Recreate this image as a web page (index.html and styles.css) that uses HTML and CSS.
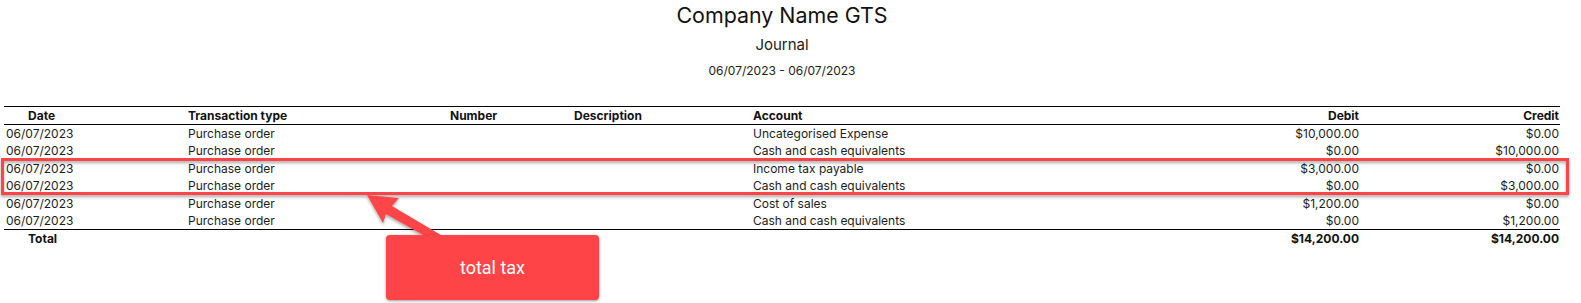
FILE: index.html
```html
<!DOCTYPE html>
<html lang="en">
<head>
<meta charset="utf-8">
<title>Journal</title>
<link rel="stylesheet" href="styles.css">
</head>
<body>
<div class="page">
  <div class="report">
    <header class="report-head">
      <div class="company">Company Name GTS</div>
      <div class="report-name">Journal</div>
      <div class="period">06/07/2023 - 06/07/2023</div>
    </header>
    <table class="journal">
      <colgroup>
        <col class="c-date"><col class="c-type"><col class="c-num"><col class="c-desc"><col class="c-acct"><col class="c-debit"><col class="c-credit">
      </colgroup>
      <thead>
        <tr>
          <th class="h-date">Date</th>
          <th class="h-left">Transaction type</th>
          <th class="h-num">Number</th>
          <th class="h-num">Description</th>
          <th class="h-left">Account</th>
          <th class="num">Debit</th>
          <th class="num">Credit</th>
        </tr>
      </thead>
      <tbody>
        <tr><td>06/07/2023</td><td>Purchase order</td><td></td><td></td><td>Uncategorised Expense</td><td class="num">$10,000.00</td><td class="num">$0.00</td></tr>
        <tr><td>06/07/2023</td><td>Purchase order</td><td></td><td></td><td>Cash and cash equivalents</td><td class="num">$0.00</td><td class="num">$10,000.00</td></tr>
        <tr><td>06/07/2023</td><td>Purchase order</td><td></td><td></td><td>Income tax payable</td><td class="num">$3,000.00</td><td class="num">$0.00</td></tr>
        <tr><td>06/07/2023</td><td>Purchase order</td><td></td><td></td><td>Cash and cash equivalents</td><td class="num">$0.00</td><td class="num">$3,000.00</td></tr>
        <tr><td>06/07/2023</td><td>Purchase order</td><td></td><td></td><td>Cost of sales</td><td class="num">$1,200.00</td><td class="num">$0.00</td></tr>
        <tr><td>06/07/2023</td><td>Purchase order</td><td></td><td></td><td>Cash and cash equivalents</td><td class="num">$0.00</td><td class="num">$1,200.00</td></tr>
      </tbody>
      <tfoot>
        <tr><td class="h-date">Total</td><td></td><td></td><td></td><td></td><td class="num">$14,200.00</td><td class="num">$14,200.00</td></tr>
      </tfoot>
    </table>
  </div>

  <div class="highlight"></div>
  <svg class="arrow" width="1581" height="303" viewBox="0 0 1581 303" xmlns="http://www.w3.org/2000/svg">
    <defs>
      <filter id="sh" x="-20%" y="-20%" width="140%" height="140%">
        <feDropShadow dx="0" dy="2" stdDeviation="1.5" flood-color="#000" flood-opacity="0.35"/>
      </filter>
    </defs>
    <g filter="url(#sh)" fill="#fe4447">
      <polygon points="367,195 399,198 392,206 446,238 432,240 386,214 383,223"/>
    </g>
  </svg>
  <div class="callout">total tax</div>
</div>
</body>
</html>
```

FILE: styles.css
```css
html, body {
  margin: 0;
  padding: 0;
  background: #ffffff;
}

.page {
  position: relative;
  width: 1581px;
  height: 303px;
  overflow: hidden;
  font-family: Inter, "Noto Sans", sans-serif;
  color: #1c1c1c;
}

.report {
  margin-left: 4px;
  width: 1556px;
}

.report-head {
  display: flex;
  flex-direction: column;
  align-items: center;
  padding-top: 2px;
}

.company {
  font-size: 21.4px;
  line-height: 27px;
  color: #111;
}

.report-name {
  font-size: 15px;
  line-height: 18px;
  margin-top: 7px;
}

.period {
  font-size: 12px;
  line-height: 15px;
  margin-top: 9px;
}

.journal {
  margin-top: 28px;
  width: 1556px;
  table-layout: fixed;
  border-collapse: collapse;
  font-size: 12px;
}

.c-date { width: 182px; }
.c-type { width: 260px; }
.c-num { width: 124px; }
.c-desc { width: 181px; }
.c-acct { width: 249px; }
.c-debit { width: 361px; }
.c-credit { width: 199px; }

.journal th,
.journal td {
  padding: 0 1px 0 2px;
  height: 17px;
  line-height: 17px;
  white-space: nowrap;
  text-align: left;
}

.journal th {
  font-weight: 700;
  color: #111;
}

.journal thead tr {
  border-top: 1px solid #000;
  border-bottom: 1px solid #000;
}

.journal tbody td {
  height: 17.4px;
  line-height: 17.4px;
}

.journal tfoot tr {
  border-top: 1px solid #000;
}

.journal tfoot td {
  font-weight: 700;
  color: #111;
}

.journal .h-date {
  padding-left: 24px;
}

.journal .h-num {
  padding-left: 4px;
}

.journal .num {
  text-align: right;
}

.journal td.num:nth-child(6),
.journal th.num:nth-child(6) {
  padding-right: 2px;
}

.highlight {
  position: absolute;
  left: 1px;
  top: 158px;
  width: 1562px;
  height: 31px;
  border: 3px solid #fe4447;
  filter: drop-shadow(0 2px 1.5px rgba(0, 0, 0, 0.35));
}

.arrow {
  position: absolute;
  left: 0;
  top: 0;
}

.callout {
  position: absolute;
  left: 386px;
  top: 235px;
  width: 213px;
  height: 65px;
  border-radius: 4px;
  background: #fe4447;
  box-shadow: 0 1px 3px rgba(0, 0, 0, 0.4);
  color: #fff;
  font-family: Roboto, "Liberation Sans", sans-serif;
  font-size: 18px;
  display: flex;
  align-items: center;
  justify-content: center;
}
```
